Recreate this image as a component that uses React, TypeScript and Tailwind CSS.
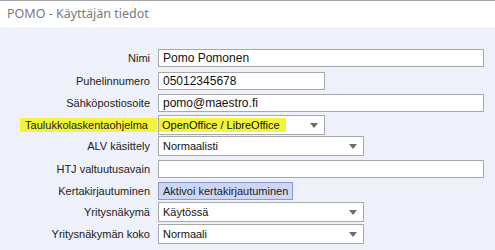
import React from 'react';

const labelFont = { fontFamily: '"Liberation Sans", Arial, sans-serif' };

function Arrow() {
  return (
    <svg width="8" height="5" viewBox="0 0 8 5" className="shrink-0">
      <path d="M0 0 H8 L4 5 Z" fill="#6b6b6b" />
    </svg>
  );
}

function Row({ label, mt, highlight, children }: { label: string; mt: string; highlight?: boolean; children: React.ReactNode }) {
  return (
    <div className={`flex items-center ${mt}`}>
      <div className="w-[157px] flex justify-end pr-[7px] text-[11px] text-[#222]">
        {highlight ? (
          <span className="bg-[#f3f33a] pl-[5px] pr-[9px] -mr-[7px] leading-[14px]">{label}</span>
        ) : (
          <span>{label}</span>
        )}
      </div>
      {children}
    </div>
  );
}

function Input({ value, w }: { value: string; w: string }) {
  return (
    <div className={`${w} h-[18px] ml-[1px] bg-white border border-[#a8a8a8] flex items-center pl-[4px] text-[12px] text-[#111]`}>
      {value}
    </div>
  );
}

function Select({ value, w, highlight }: { value: string; w: string; highlight?: boolean }) {
  return (
    <div className={`${w} h-[20px] ml-[1px] bg-white border border-[#a8a8a8] flex items-center justify-between pr-[6px] text-[11px] text-[#111]`}>
      {highlight ? (
        <span className="bg-[#f3f33a] pl-[3px] pr-[6px] leading-[14px]">{value}</span>
      ) : (
        <span className="pl-[4px]">{value}</span>
      )}
      <Arrow />
    </div>
  );
}

export default function App() {
  return (
    <div className="w-[495px] h-[250px] bg-[#eef1f9] overflow-hidden" style={labelFont}>
      <div className="h-[1px] bg-[#a3a3a3]" />
      <div className="h-[26px] bg-white flex items-center pl-[7px] text-[12.5px] text-[#7a7a7a]" style={{ fontFamily: '"Noto Sans", "Open Sans", sans-serif' }}>
        POMO - Käyttäjän tiedot
      </div>
      <div className="pt-[22px] flex flex-col">
        <Row label="Nimi" mt="mt-0">
          <Input value="Pomo Pomonen" w="w-[326px]" />
        </Row>
        <Row label="Puhelinnumero" mt="mt-[5px]">
          <Input value="05012345678" w="w-[167px]" />
        </Row>
        <Row label="Sähköpostiosoite" mt="mt-[4px]">
          <Input value="pomo@maestro.fi" w="w-[326px]" />
        </Row>
        <Row label="Taulukkolaskentaohjelma" mt="mt-[3px]" highlight>
          <Select value="OpenOffice / LibreOffice" w="w-[167px]" highlight />
        </Row>
        <Row label="ALV käsittely" mt="mt-[1px]">
          <Select value="Normaalisti" w="w-[206px]" />
        </Row>
        <Row label="HTJ valtuutusavain" mt="mt-[4px]">
          <Input value="" w="w-[326px]" />
        </Row>
        <Row label="Kertakirjautuminen" mt="mt-[4px]">
          <button className="h-[18px] ml-[1px] px-[4px] bg-[#cdd6f4] border border-[#8898d0] text-[11px] text-[#222] flex items-center">
            Aktivoi kertakirjautuminen
          </button>
        </Row>
        <Row label="Yritysnäkymä" mt="mt-[2px]">
          <Select value="Käytössä" w="w-[206px]" />
        </Row>
        <Row label="Yritysnäkymän koko" mt="mt-[2px]">
          <Select value="Normaali" w="w-[206px]" />
        </Row>
      </div>
    </div>
  );
}
